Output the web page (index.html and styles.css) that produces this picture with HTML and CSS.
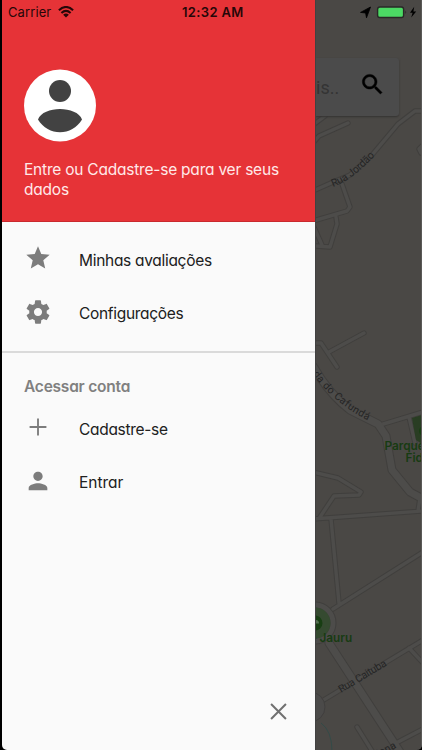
FILE: index.html
```
<!DOCTYPE html>
<html lang="pt-BR">
<head>
<meta charset="utf-8">
<title>Menu</title>
<link rel="stylesheet" href="styles.css">
</head>
<body>
<div class="phone">
  <aside class="drawer">
    <header class="profile">
      <svg class="avatar" viewBox="0 0 72 72"><circle cx="36" cy="36" r="36" fill="#fff"/><circle cx="36" cy="21.5" r="11" fill="#424242"/><path d="M14 50C19 36 53 36 58 50C48 67 24 67 14 50Z" fill="#424242"/></svg>
      <p class="intro">Entre ou Cadastre-se para ver seus<br>dados</p>
    </header>
    <nav class="menu">
      <a class="item"><svg class="icon" viewBox="0 0 24 24"><path d="M12 17.27 18.18 21l-1.64-7.03L22 9.24l-7.19-.61L12 2 9.19 8.63 2 9.24l5.46 4.73L5.82 21z"/></svg><span>Minhas avaliações</span></a>
      <a class="item"><svg class="icon" viewBox="0 0 24 24"><path d="M19.43 12.98c.04-.32.07-.64.07-.98s-.03-.66-.07-.98l2.11-1.65c.19-.15.24-.42.12-.64l-2-3.46c-.12-.22-.39-.3-.61-.22l-2.49 1c-.52-.4-1.08-.73-1.69-.98l-.38-2.65C14.46 2.18 14.25 2 14 2h-4c-.25 0-.46.18-.49.42l-.38 2.65c-.61.25-1.17.59-1.69.98l-2.49-1c-.23-.09-.49 0-.61.22l-2 3.46c-.13.22-.07.49.12.64l2.11 1.65c-.04.32-.07.65-.07.98s.03.66.07.98l-2.11 1.65c-.19.15-.24.42-.12.64l2 3.46c.12.22.39.3.61.22l2.49-1c.52.4 1.08.73 1.69.98l.38 2.65c.03.24.24.42.49.42h4c.25 0 .46-.18.49-.42l.38-2.65c.61-.25 1.17-.59 1.69-.98l2.49 1c.23.09.49 0 .61-.22l2-3.46c.12-.22.07-.49-.12-.64l-2.11-1.65zM12 15.5c-1.93 0-3.5-1.57-3.5-3.5s1.57-3.5 3.5-3.5 3.5 1.57 3.5 3.5-1.57 3.5-3.5 3.5z"/></svg><span>Configurações</span></a>
    </nav>
    <section class="account">
      <h2>Acessar conta</h2>
      <a class="item"><svg class="icon" viewBox="0 0 24 24"><path d="M19.2 12.8h-6.4v6.4h-1.6v-6.4H4.8v-1.6h6.4V4.8h1.6v6.4h6.4z"/></svg><span>Cadastre-se</span></a>
      <a class="item entrar"><svg class="icon" viewBox="0 0 24 24"><path d="M12 12c2.21 0 4-1.79 4-4s-1.79-4-4-4-4 1.79-4 4 1.79 4 4 4zm0 2c-2.67 0-8 1.34-8 4v2h16v-2c0-2.66-5.33-4-8-4z"/></svg><span>Entrar</span></a>
    </section>
    <footer class="foot"><svg class="close" viewBox="0 0 16 16"><path d="M1 1 15 15M15 1 1 15"/></svg></footer>
  </aside>
  <main class="map">
    <svg class="streets" viewBox="315 0 107 750">
      <defs>
        <g id="minor">
          <path d="M313 191 331 183 350 175 372 155 398 124 415 111H423M313 143 319 136 348 123M313 125 325 116M342 184 350 207 347 211 313 221M336 217 337 224 330 247 316 246M313 225 322 245"/>
          <path d="M313 343H321L337 367M329 352 364 333M380 425 423 412M409 417 415 443M313 472 338 478 361 492 359 495 334 496 320 517M313 519 423 511M418 511 420 498M331 519 339 603M333 609 423 552"/>
          <path d="M322 701 423 640M409 648 423 663M357 727 372 751M398 742 423 729M423 145 419 149 421 153"/>
        </g>
        <g id="major"><path d="M313 366Q329 394 350 410L378 424 386 436 392 470 410 492 423 499M329 643 400 752"/></g>
      </defs>
      <g class="edge"><use href="#minor" stroke-width="5.4"/><use href="#major" stroke-width="9"/><circle cx="315" cy="623" r="18" stroke-width="7"/></g>
      <g class="road"><use href="#minor" stroke-width="3.4"/><use href="#major" stroke-width="7"/><circle cx="315" cy="623" r="18" stroke-width="5"/></g>
      <circle cx="310" cy="707" r="15" fill="#4b4a49" stroke="#403f3e"/>
      <path d="M321 723Q332 731 332 751" fill="none" stroke="#344b48"/>
      <circle cx="315" cy="623" r="15.5" fill="#354a30"/><circle cx="315" cy="623" r="7.5" fill="#183e13"/><path d="M315 620q4 0 4 3.5h-4z" fill="#557052"/>
      <path d="M412 418 422 415V444L416 440Z" fill="#293d23"/>
      <circle cx="424" cy="431" r="5" fill="#183e13"/>
      <g class="street-name">
        <path id="jordao" d="M333 187Q355 179 379 151" fill="none"/>
        <text><textPath href="#jordao" textLength="53">Rua Jordão</textPath></text>
        <path id="cafunda" d="M309 369Q331 402 371 422" fill="none"/>
        <text><textPath href="#cafunda" textLength="79">ada do Cafundá</textPath></text>
        <text transform="translate(341 693) rotate(-31)" textLength="54">Rua Caituba</text>
        <text transform="translate(379 757) rotate(-28)">iona</text>
      </g>
      <g class="park-name"><text x="384.5" y="450">Parque</text><text x="405.5" y="462">Fid</text><text x="309.5" y="642">e Jauru</text></g>
    </svg>
    <div class="search"><span>is..</span><svg viewBox="0 0 24 24"><path d="M15.5 14h-.79l-.28-.27C15.41 12.59 16 11.11 16 9.5 16 5.91 13.09 3 9.5 3S3 5.91 3 9.5 5.91 16 9.5 16c1.61 0 3.09-.59 4.23-1.57l.27.28v.79l5 4.99L20.49 19l-4.99-5zm-6 0C7.01 14 5 11.99 5 9.5S7.01 5 9.5 5 14 7.01 14 9.5 11.99 14 9.5 14z"/></svg></div>
  </main>
  <div class="status">
    <div class="carrier"><span>Carrier</span><svg viewBox="0 0 16 12"><g fill="none" stroke="#260708" stroke-width="2.1"><path d="M.9 4.2Q8-2.2 15.1 4.2M3.4 7Q8 2.9 12.6 7"/></g><path d="M8 11.5 5.1 8.7Q8 6.4 10.9 8.7Z" fill="#260708"/></svg></div>
    <time>12:32 AM</time>
    <svg class="power" viewBox="0 0 58 14"><path d="M.5 7.4 10.5 2 6.5 12.8 5.6 8Z" fill="#000" stroke="#000" stroke-width=".8" stroke-linejoin="round"/><rect x="17.6" y="2" width="26" height="10.5" rx="2.2" fill="#4cd964" stroke="#292827" stroke-width="1.4"/><path d="M45.4 5.5q1.7 1.7 0 3.5Z" fill="#252423"/><path d="M54.2 1.8 50 7.8h2.6L51.2 12.5 56.2 6.4H53.4Z" fill="#000"/></svg>
  </div>
</div>
</body>
</html>
```
FILE: styles.css
```
* { box-sizing: border-box; }
body { margin: 0; background: #000; }
.phone {
  position: relative;
  display: grid;
  grid-template-columns: 313px 107px;
  width: 422px;
  height: 750px;
  padding: 0 0 0 2px;
  overflow: hidden;
  font-family: Inter, "Noto Sans", sans-serif;
}
.drawer {
  display: flex;
  flex-direction: column;
  height: 750px;
  background: #fafafa;
  border-bottom-left-radius: 5px;
  color: #202020;
  font-feature-settings: "cv11";
}
.profile {
  height: 222px;
  padding: 69px 22px 0;
  background: #e63337;
  border-bottom: 1px solid #c9292e;
}
.avatar { display: block; width: 72px; height: 73px; }
.intro {
  margin: 18px 0 0;
  color: #ffe9e9;
  font-size: 15.5px;
  line-height: 20px;
  letter-spacing: -.22px;
  white-space: nowrap;
}
.menu { height: 131px; padding-top: 11px; border-bottom: 2px solid #dadada; }
.item {
  display: flex;
  align-items: center;
  height: 53.5px;
  padding-left: 22px;
  font-size: 15.5px;
  letter-spacing: -.3px;
  white-space: nowrap;
}
.item span { padding-top: 1px; }
.entrar { letter-spacing: 0; }
.icon { width: 28px; height: 28px; margin: -3px 27px 0 0; fill: #7c7c7c; }
.account { padding-top: 24px; }
h2 {
  margin: 0;
  padding-left: 22px;
  color: #808080;
  font-size: 15.5px;
  font-weight: 600;
  line-height: 20px;
  letter-spacing: -.22px;
}
.account .item:first-of-type { margin-top: 5px; }
.foot { display: flex; justify-content: flex-end; margin-top: auto; padding: 0 28px 30px; }
.close { width: 17px; height: 17px; fill: none; stroke: #707070; stroke-width: 1.9; }
.map {
  display: grid;
  height: 750px;
  background: #4a4845;
  border-left: 1px solid #414141;
  border-right: 1px solid #5b5a58;
  border-bottom-right-radius: 5px;
  overflow: hidden;
}
.streets { grid-area: 1 / 1; width: 107px; height: 750px; margin-left: -1px; }
.edge { fill: none; stroke: #403f3d; stroke-linecap: round; stroke-linejoin: round; }
.road { fill: none; stroke: #4d4c4a; stroke-linecap: round; stroke-linejoin: round; }
.street-name { fill: #252525; font: 10.5px Roboto, sans-serif; }
.park-name { fill: #173b12; font: 600 11.8px Inter, sans-serif; }
.search {
  grid-area: 1 / 1;
  align-self: start;
  display: flex;
  align-items: center;
  justify-content: space-between;
  z-index: 1;
  width: 83px;
  height: 58px;
  margin-top: 58px;
  padding-right: 13px;
  border-radius: 0 3px 3px 0;
  background: #4b4b4b;
  box-shadow: 0 1px 2px #343331;
  color: #343434;
  font: 18px Roboto, sans-serif;
}
.search svg { width: 27px; height: 27px; margin-top: -6px; fill: #000; stroke: #000; stroke-width: .4; }
.status {
  position: absolute;
  inset: 4px 0 auto 8px;
  z-index: 2;
  display: grid;
  grid-template-columns: 174px 1fr 58px;
  align-items: center;
  height: 14px;
  padding-right: 4px;
  color: #260708;
  font-size: 13px;
}
.carrier { display: flex; align-items: center; gap: 7px; letter-spacing: .1px; }
.carrier svg { width: 16px; height: 12px; }
time { font-weight: 600; letter-spacing: .35px; }
.power { width: 58px; height: 14px; }
```
